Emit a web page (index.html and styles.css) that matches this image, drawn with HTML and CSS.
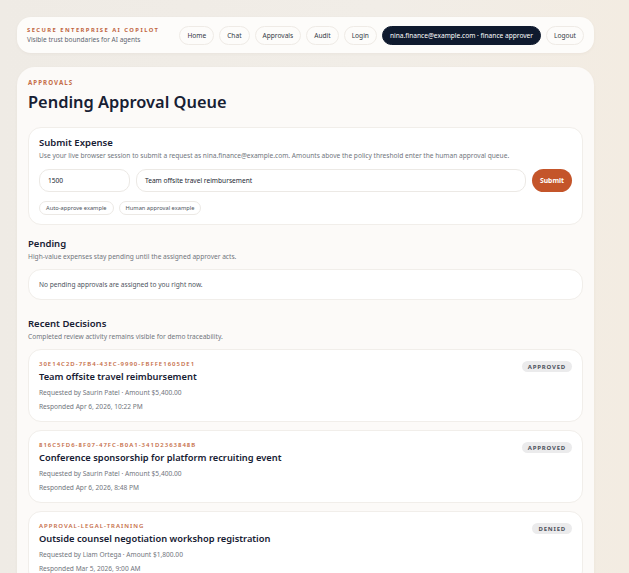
FILE: index.html
```html
<!DOCTYPE html>
<html lang="en">
<head>
<meta charset="utf-8">
<title>Pending Approval Queue</title>
<link rel="stylesheet" href="styles.css">
</head>
<body>
<div class="page">
  <header class="topbar">
    <div class="brand">
      <div class="brand-title">SECURE ENTERPRISE AI COPILOT</div>
      <div class="brand-sub">Visible trust boundaries for AI agents</div>
    </div>
    <nav class="nav">
      <a class="pill">Home</a>
      <a class="pill">Chat</a>
      <a class="pill">Approvals</a>
      <a class="pill">Audit</a>
      <a class="pill">Login</a>
      <span class="pill pill-user">nina.finance@example.com · finance approver</span>
      <a class="pill">Logout</a>
    </nav>
  </header>

  <main class="main">
    <div class="eyebrow">APPROVALS</div>
    <h1 class="title">Pending Approval Queue</h1>

    <section class="card submit">
      <h2 class="card-title">Submit Expense</h2>
      <p class="muted">Use your live browser session to submit a request as nina.finance@example.com. Amounts above the policy threshold enter the human approval queue.</p>
      <div class="form-row">
        <div class="input amount">1500</div>
        <div class="input desc">Team offsite travel reimbursement</div>
        <button class="btn-submit">Submit</button>
      </div>
      <div class="examples">
        <span class="chip">Auto-approve example</span>
        <span class="chip">Human approval example</span>
      </div>
    </section>

    <section class="section pending">
      <h2 class="section-title">Pending</h2>
      <p class="muted">High-value expenses stay pending until the assigned approver acts.</p>
      <div class="card empty">No pending approvals are assigned to you right now.</div>
    </section>

    <section class="section recent">
      <h2 class="section-title">Recent Decisions</h2>
      <p class="muted">Completed review activity remains visible for demo traceability.</p>
      <div class="decisions">
        <article class="card decision">
          <div class="decision-body">
            <div class="decision-id">30E14C2D-7FB4-43EC-9990-FBFFE1605DE1</div>
            <h3 class="decision-title">Team offsite travel reimbursement</h3>
            <div class="meta first">Requested by Saurin Patel · Amount $5,400.00</div>
            <div class="meta">Responded Apr 6, 2026, 10:22 PM</div>
          </div>
          <span class="badge">APPROVED</span>
        </article>
        <article class="card decision">
          <div class="decision-body">
            <div class="decision-id">816C5FD6-8F07-47FC-B0A1-341D2363848B</div>
            <h3 class="decision-title">Conference sponsorship for platform recruiting event</h3>
            <div class="meta first">Requested by Saurin Patel · Amount $5,400.00</div>
            <div class="meta">Responded Apr 6, 2026, 8:48 PM</div>
          </div>
          <span class="badge">APPROVED</span>
        </article>
        <article class="card decision">
          <div class="decision-body">
            <div class="decision-id">APPROVAL-LEGAL-TRAINING</div>
            <h3 class="decision-title">Outside counsel negotiation workshop registration</h3>
            <div class="meta first">Requested by Liam Ortega · Amount $1,800.00</div>
            <div class="meta">Responded Mar 5, 2026, 9:00 AM</div>
          </div>
          <span class="badge">DENIED</span>
        </article>
      </div>
    </section>
  </main>
</div>
</body>
</html>
```

FILE: styles.css
```css
* { box-sizing: border-box; }
html, body { margin: 0; padding: 0; }
body {
  font-family: "Noto Sans", "Open Sans", sans-serif;
  color: #1b2333;
  background: linear-gradient(90deg, #efebe5 0%, #f1ede7 60%, #f3ece2 100%);
  min-height: 573px;
  overflow: hidden;
}
.page {
  padding: 17px 35px 0 17px;
  display: flex;
  flex-direction: column;
  gap: 14px;
}
.topbar {
  height: 36px;
  background: #fdfcfa;
  border-radius: 14px;
  display: flex;
  align-items: center;
  justify-content: space-between;
  padding: 0 10px 0 10px;
  box-shadow: 0 1px 3px rgba(120, 100, 80, 0.06);
}
.brand-title {
  font-size: 5.8px;
  font-weight: 700;
  letter-spacing: 1.45px;
  color: #c0653f;
  line-height: 9px;
  white-space: nowrap;
}
.brand-sub {
  font-size: 6.5px;
  color: #5f6570;
  line-height: 10px;
  white-space: nowrap;
}
.nav {
  display: flex;
  align-items: center;
  gap: 5px;
}
.pill {
  height: 19px;
  padding: 0 7px;
  border: 1px solid #efebe6;
  border-radius: 10px;
  font-size: 6.6px;
  color: #333945;
  display: flex;
  align-items: center;
  background: #fdfcfa;
  white-space: nowrap;
}
.pill-user {
  background: #0f1a2e;
  border-color: #0f1a2e;
  color: #ffffff;
}
.main {
  background: #fcfaf8;
  border-radius: 18px 18px 0 0;
  padding: 12px 11px 0 11px;
  box-shadow: 0 1px 3px rgba(120, 100, 80, 0.06);
  min-height: 520px;
}
.eyebrow {
  font-size: 6.2px;
  font-weight: 700;
  letter-spacing: 1.05px;
  color: #c56d47;
  line-height: 8px;
}
.title {
  margin: 2px 0 0 0;
  font-size: 16.4px;
  font-weight: 600;
  line-height: 26px;
  color: #172033;
}
.card {
  background: #ffffff;
  border: 1px solid #f1eeea;
  border-radius: 13px;
}
.submit {
  margin-top: 12px;
  padding: 8px 10px 9px 10px;
}
.card-title, .section-title {
  margin: 0;
  font-size: 9.5px;
  font-weight: 600;
  line-height: 14px;
  color: #172033;
}
.muted {
  margin: 1px 0 0 0;
  font-size: 6.6px;
  color: #71757d;
  line-height: 10px;
}
.form-row {
  display: flex;
  gap: 6px;
  margin-top: 8px;
  align-items: center;
}
.input {
  height: 23px;
  border: 1px solid #ece9e5;
  border-radius: 10px;
  font-size: 6.6px;
  color: #222833;
  display: flex;
  align-items: center;
  padding: 0 8px;
  background: #fff;
}
.amount { width: 91px; }
.desc { flex: 1; }
.btn-submit {
  height: 23px;
  width: 40px;
  border: none;
  border-radius: 12px;
  background: #c4552a;
  color: #fff;
  font-family: inherit;
  font-weight: 700;
  font-size: 6.8px;
  padding: 0;
}
.examples {
  display: flex;
  gap: 5px;
  margin-top: 9px;
}
.chip {
  height: 14px;
  padding: 0 6px;
  border: 1px solid #ece9e5;
  border-radius: 8px;
  font-size: 5.7px;
  color: #4e545e;
  display: flex;
  align-items: center;
}
.pending { margin-top: 12px; }
.recent { margin-top: 17px; }
.empty {
  margin-top: 7px;
  height: 31px;
  display: flex;
  align-items: center;
  padding: 0 10px;
  font-size: 6.6px;
  color: #4e545e;
}
.decisions {
  display: flex;
  flex-direction: column;
  gap: 8px;
  margin-top: 7px;
}
.decision {
  height: 73px;
  display: flex;
  justify-content: space-between;
  align-items: flex-start;
  padding: 10px 10px 0 10px;
}
.decision-id {
  font-size: 6px;
  font-weight: 600;
  letter-spacing: 1px;
  color: #c56d47;
  line-height: 9px;
}
.decision-title {
  margin: 0;
  font-size: 9.3px;
  font-weight: 600;
  line-height: 16px;
  color: #172033;
}
.meta {
  font-size: 6.6px;
  color: #71757d;
  line-height: 14px;
}
.meta.first { margin-top: 1px; }
.badge {
  margin-top: 1px;
  height: 11px;
  padding: 0 6px;
  border-radius: 6px;
  background: #ebebec;
  font-size: 6px;
  font-weight: 700;
  letter-spacing: 0.8px;
  color: #4b515b;
  display: flex;
  align-items: center;
}
```
